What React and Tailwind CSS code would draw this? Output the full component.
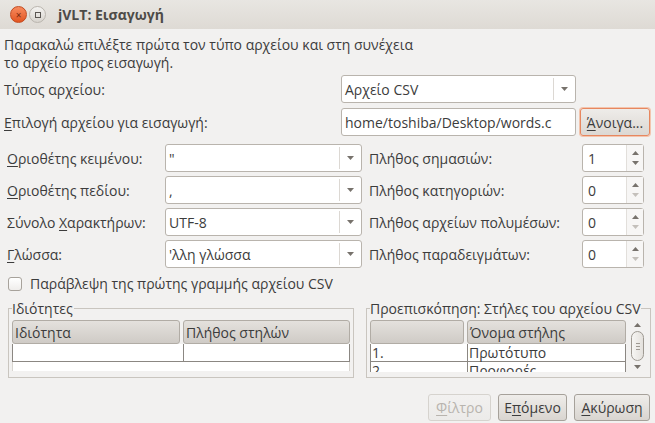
import React from "react";

const font = { fontFamily: "'Open Sans', 'Noto Sans', sans-serif" };

const U = ({ children }) => <span className="underline underline-offset-2">{children}</span>;

const Arrow = ({ up, faded }) => (
  <svg width="7" height="4" viewBox="0 0 7 4">
    <path d={up ? "M0 4 L3.5 0 L7 4 Z" : "M0 0 L3.5 4 L7 0 Z"} fill={faded ? "#c4c0bb" : "#77726c"} />
  </svg>
);

const Combo = ({ value, className = "" }) => (
  <div className={`flex h-[28px] items-stretch rounded-[3px] border border-[#b9b4ad] bg-white ${className}`}>
    <div className="flex flex-1 items-center overflow-hidden whitespace-nowrap pl-[3px] text-[14px] text-[#3c3c3c]">{value}</div>
    <div className="my-[2px] w-px bg-[#dcd8d3]" />
    <div className="flex w-[21px] items-center justify-center">
      <Arrow />
    </div>
  </div>
);

const Spin = ({ value, faded }) => (
  <div className="flex h-[28px] w-[62px] items-stretch rounded-[3px] border border-[#b9b4ad] bg-white">
    <div className="flex flex-1 items-center pl-[5px] text-[14px] text-[#3c3c3c]">{value}</div>
    <div className="flex w-[17px] flex-col items-center justify-center gap-[6px] border-l border-[#e2dfdb] bg-[#f7f6f5]">
      <Arrow up />
      <Arrow faded={faded} />
    </div>
  </div>
);

const Header = ({ children, className = "" }) => (
  <div className={`flex h-[24px] items-center whitespace-nowrap rounded-[3px] border border-[#b1aca5] bg-gradient-to-b from-[#e4e1dd] to-[#cfcbc6] px-[2px] text-[14px] text-[#3c3c3c] ${className}`}>
    {children}
  </div>
);

const Button = ({ children, className = "" }) => (
  <div className={`flex h-[27px] items-center justify-center whitespace-nowrap rounded-[3px] border bg-gradient-to-b text-[14px] ${className}`}>
    {children}
  </div>
);

export default function App() {
  const rows = [
    [<><U>Ο</U>ριοθέτης κειμένου:</>, '"', "Πλήθος σημασιών:", "1", false],
    [<><U>Ο</U>ριοθέτης πεδίου:</>, ",", "Πλήθος κατηγοριών:", "0", true],
    [<>Σύνολο <U>Χ</U>αρακτήρων:</>, "UTF-8", "Πλήθος αρχείων πολυμέσων:", "0", true],
    [<><U>Γ</U>λώσσα:</>, "'λλη γλώσσα", "Πλήθος παραδειγμάτων:", "0", true],
  ];

  return (
    <div className="flex h-[423px] w-[655px] flex-col overflow-hidden bg-[#f2f1f0] text-[#3c3c3c]" style={font}>
      {/* Title bar */}
      <div className="flex h-[29px] items-center bg-gradient-to-b from-[#e8e6e2] to-[#dedad4] pl-[10px]">
        <div className="flex h-[17px] w-[17px] items-center justify-center rounded-full border border-[#c24a1f] bg-gradient-to-b from-[#f78b5e] to-[#e2541e] text-[10px] leading-none text-[#7a2a0e]">
          ×
        </div>
        <div className="ml-[2px] flex h-[17px] w-[17px] items-center justify-center rounded-full border border-[#bab5ae] bg-gradient-to-b from-[#f4f3f1] to-[#d8d4ce]">
          <div className="h-[6px] w-[6px] border border-[#5a5652]" />
        </div>
        <div className="ml-[12px] text-[14px] font-bold text-[#4d4b48]">jVLT: Εισαγωγή</div>
      </div>

      <div className="flex flex-1 flex-col px-[4px]">
        <div className="mt-[7px] text-[14px] leading-[18px]">
          Παρακαλώ επιλέξτε πρώτα τον τύπο αρχείου και στη συνέχεια
          <br />
          το αρχείο προς εισαγωγή.
        </div>

        <div className="mt-[3px] flex items-center">
          <div className="w-[337px] text-[14px]">
            Τύπος αρ<U>χ</U>είου:
          </div>
          <Combo value="Αρχείο CSV" className="w-[235px]" />
        </div>

        <div className="mt-[5px] flex items-center">
          <div className="w-[337px] text-[14px]">
            <U>Ε</U>πιλογή αρχείου για εισαγωγή:
          </div>
          <div className="flex h-[28px] w-[235px] items-center overflow-hidden whitespace-nowrap rounded-[3px] border border-[#b9b4ad] bg-white pl-[3px] text-[14px]">
            home/toshiba/Desktop/words.c
          </div>
          <Button className="ml-[4px] h-[28px] w-[70px] border-[#e7875f] from-[#eeece9] to-[#dcd8d3] shadow-[0_0_0_1px_#f3c4ad]">
            <U>Ά</U>νοιγα...
          </Button>
        </div>

        <div className="mt-[8px] flex flex-col gap-[4px]">
          {rows.map(([label, val, rlabel, num, faded], i) => (
            <div key={i} className="flex items-center">
              <div className="w-[161px] whitespace-nowrap pl-[3px] text-[14px]">{label}</div>
              <Combo value={val} className="w-[197px]" />
              <div className="w-[220px] whitespace-nowrap pl-[7px] text-[14px]">{rlabel}</div>
              <Spin value={num} faded={faded} />
            </div>
          ))}
        </div>

        <div className="mt-[5px] flex items-center pl-[4px]">
          <div className="h-[14px] w-[14px] rounded-[3px] border border-[#a7a29b] bg-gradient-to-b from-white to-[#efedeb]" />
          <div className="ml-[8px] text-[14px]">Παράβλεψη της πρώτης γραμμής αρχείου CSV</div>
        </div>

        <div className="mt-[6px] flex gap-[12px] pl-[4px]">
          {/* Properties */}
          <div className="relative mt-[8px] h-[70px] w-[346px] border border-[#c9c5bf] px-[3px] pt-[11px]">
            <div className="absolute left-[3px] top-[-11px] bg-[#f2f1f0] pr-[1px] text-[14px]">Ιδιότητες</div>
            <div className="flex">
              <Header className="w-[168px]">Ιδιότητα</Header>
              <Header className="ml-[3px] flex-1">Πλήθος στηλών</Header>
            </div>
            <div className="flex h-[18px] border-x border-b border-[#8b8782] bg-white">
              <div className="w-[171px] border-r border-[#8b8782]" />
            </div>
            <div className="h-[9px] border-x border-[#d8d5d0] bg-white" />
          </div>

          {/* Preview */}
          <div className="relative mt-[8px] h-[70px] flex-1 border border-[#c9c5bf] pl-[3px] pt-[11px]">
            <div className="absolute left-[3px] top-[-11px] whitespace-nowrap bg-[#f2f1f0] pr-[1px] text-[14px]">
              Προεπισκόπηση: Στήλες του αρχείου CSV
            </div>
            <div className="flex">
              <div className="w-[256px] overflow-hidden">
                <div className="flex">
                  <Header className="w-[94px]" />
                  <Header className="ml-[3px] flex-1">Όνομα στήλης</Header>
                </div>
                <div className="h-[28px] overflow-hidden border-x border-[#8b8782] bg-white">
                  <div className="flex h-[18px] border-b border-[#8b8782] text-[14px] leading-[17px]">
                    <div className="w-[97px] border-r border-[#8b8782] pl-[1px]">1.</div>
                    <div className="pl-[1px]">Πρωτότυπο</div>
                  </div>
                  <div className="flex h-[18px] text-[14px] leading-[17px]">
                    <div className="w-[97px] border-r border-[#8b8782] pl-[1px]">2.</div>
                    <div className="pl-[1px]">Προφορές</div>
                  </div>
                </div>
              </div>
              <div className="ml-[4px] flex w-[15px] flex-col items-center pt-[3px]">
                <Arrow up />
                <div className="mt-[4px] flex h-[30px] w-[13px] items-center justify-center rounded-full border border-[#9e9992] bg-gradient-to-r from-[#f6f5f3] to-[#e4e1dd]">
                  <div className="flex flex-col gap-[2px]">
                    <div className="h-px w-[4px] bg-[#9e9992]" />
                    <div className="h-px w-[4px] bg-[#9e9992]" />
                    <div className="h-px w-[4px] bg-[#9e9992]" />
                  </div>
                </div>
                <div className="mt-[4px]">
                  <Arrow />
                </div>
              </div>
            </div>
          </div>
        </div>

        <div className="mt-auto mb-[2px] flex justify-end gap-[7px] pr-[1px]">
          <Button className="w-[63px] border-[#d6d3ce] from-[#f2f1f0] to-[#ecebe9] text-[#b8b4ae]">
            <U>Φ</U>ίλτρο
          </Button>
          <Button className="w-[69px] border-[#a6a19a] from-[#efedea] to-[#d9d5d0]">
            Ε<U>π</U>όμενο
          </Button>
          <Button className="w-[76px] border-[#a6a19a] from-[#efedea] to-[#d9d5d0]">
            <U>Α</U>κύρωση
          </Button>
        </div>
      </div>
    </div>
  );
}
